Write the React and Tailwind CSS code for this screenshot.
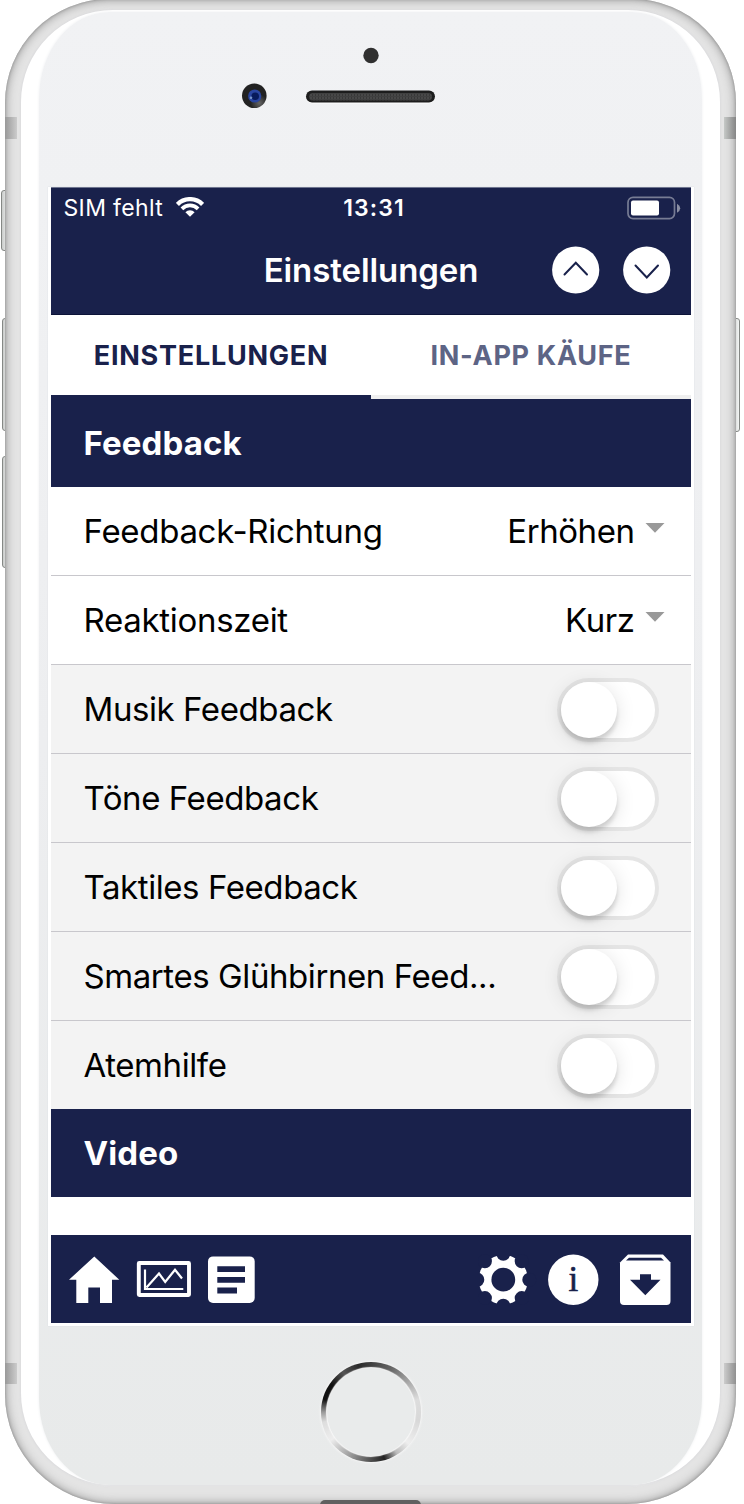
import { useState } from 'react'

const selects = [
  { label: 'Feedback-Richtung', value: 'Erhöhen' },
  { label: 'Reaktionszeit', value: 'Kurz' },
]

const toggles = [
  'Musik Feedback',
  'Töne Feedback',
  'Taktiles Feedback',
  'Smartes Glühbirnen Feed...',
  'Atemhilfe',
]

const notches = [0, 45, 90, 135, 180, 225, 270, 315]

export default function App() {
  return (
    <main className="relative w-[744px] h-[1504px] overflow-hidden bg-white font-['Inter',sans-serif] text-black">
      <SideButtons />
      <div className="relative ml-[5px] w-[731px] h-[1505px] -mt-px rounded-t-[104px] rounded-b-[110px] px-[16px] pt-[11px] pb-[19px] bg-[#e4e4e4] shadow-[inset_0_0_3px_0_#8a8a8a,inset_0_0_9px_2px_#a8a8a8] overflow-hidden">
        <div className="h-full rounded-[92px] px-[18px] pt-[2px] bg-white shadow-[0_0_2px_1px_#dcdcde]">
          <div className="h-full rounded-[70px/86px] bg-linear-to-b from-[#f1f2f4] via-[#edeef0] to-[#e8eaea] shadow-[0_0_3px_0_#eeeff1] flex flex-col items-center">
            <Sensors />
            <Screen />
            <HomeButton />
          </div>
        </div>
        <Antennas />
      </div>
      <div className="absolute left-[320px] top-[1500px] w-[101px] h-[6px] rounded-t-[5px] bg-[#606060]" />
    </main>
  )
}

function SideButtons() {
  const base = 'absolute border border-[#858885] bg-linear-to-r from-[#c9cbca] to-[#f3f5f4] rounded-[3px]'
  return (
    <>
      <div className={`${base} left-[1px] top-[190px] w-[8px] h-[61px]`} />
      <div className={`${base} left-[2px] top-[318px] w-[8px] h-[113px]`} />
      <div className={`${base} left-[2px] top-[456px] w-[8px] h-[112px]`} />
      <div className={`${base} left-[732px] top-[318px] w-[8px] h-[114px]`} />
    </>
  )
}

function Antennas() {
  return (
    <>
      <div className="absolute left-0 top-[118px] w-[12px] h-[22px] bg-linear-to-r from-[#999] to-[#ccc]" />
      <div className="absolute right-0 top-[118px] w-[12px] h-[22px] bg-linear-to-l from-[#858585] to-[#c6c9c7]" />
      <div className="absolute left-0 top-[1364px] w-[12px] h-[21px] bg-linear-to-r from-[#999] to-[#ccc]" />
      <div className="absolute right-0 top-[1364px] w-[12px] h-[21px] bg-linear-to-l from-[#909090] to-[#ccc]" />
    </>
  )
}

function Sensors() {
  return (
    <div className="h-[175px] shrink-0 w-full flex justify-center">
      <svg width="260" height="70" viewBox="241 43 260 70" className="mt-[31px] shrink-0">
        <defs>
          <radialGradient id="lens" cx="0.7" cy="0.8" r="0.7">
            <stop offset="0" stopColor="#666" />
            <stop offset="0.5" stopColor="#222" />
          </radialGradient>
          <pattern id="mesh" width="3" height="3" patternUnits="userSpaceOnUse">
            <rect width="3" height="3" fill="#484848" />
            <rect width="1" height="3" fill="#383838" />
            <rect width="3" height="1" fill="#404040" />
          </pattern>
        </defs>
        <circle cx="371" cy="55.5" r="7.7" fill="#303030" />
        <circle cx="254.3" cy="95.7" r="12.3" fill="url(#lens)" />
        <circle cx="254.7" cy="96" r="6.6" fill="#2945a0" />
        <circle cx="255.2" cy="96.2" r="3.8" fill="#071b5c" />
        <circle cx="251" cy="97.8" r="1.3" fill="#7595cc" />
        <rect x="306" y="91" width="129" height="12.4" rx="6.2" fill="#fff" />
        <rect x="306" y="90.5" width="129" height="12" rx="6" fill="#1d1d1d" />
        <rect x="309" y="93" width="123" height="7.4" rx="3.7" fill="url(#mesh)" />
      </svg>
    </div>
  )
}

function Screen() {
  return (
    <div className="w-[646px] h-[1139px] shrink-0 px-[3px] pb-[3px] bg-white shadow-[0_0_1px_0_#cfd4dc]">
      <div className="h-full flex flex-col border-t border-[#6f758f]">
        <StatusBar />
        <NavBar />
        <Tabs />
        <SectionTitle>Feedback</SectionTitle>
        {selects.map((s) => (
          <div key={s.label} className="h-[89px] shrink-0 flex items-center pt-[2px] pl-[33px] pr-[26px] border-b border-[#c8c7cc] text-[33px] tracking-[-0.3px]">
            <span className="grow">{s.label}</span>
            <span className="tracking-[-0.45px]">{s.value}</span>
            <svg width="20" height="10" className="ml-[10px] -mt-[8px]">
              <path d="M0.5 0h19L10 9.7z" fill="#999" />
            </svg>
          </div>
        ))}
        <div className="shrink-0 bg-[#f3f3f3]">
          {toggles.map((label) => <ToggleRow key={label} label={label} />)}
        </div>
        <SectionTitle>Video</SectionTitle>
        <div className="h-[38px] shrink-0" />
        <BottomBar />
      </div>
    </div>
  )
}

function StatusBar() {
  return (
    <div className="h-[39px] shrink-0 grid grid-cols-3 items-center bg-[#19214b] pl-[13px] pr-[10px] text-white">
      <div className="flex items-center pt-[2px] text-[23px] tracking-[0.35px]">
        SIM fehlt
        <svg width="28" height="20" viewBox="176 197 28 20" className="ml-[13px] -mt-[3px]">
          <path d="M177.4 204.4A17.8 17.8 0 0 1 202.6 204.4" fill="none" stroke="#fff" strokeWidth="4.4" />
          <path d="M181.9 208.8A11.5 11.5 0 0 1 198.1 208.8" fill="none" stroke="#fff" strokeWidth="3.8" />
          <path d="M190 216.8L185.4 212.3A6.4 6.4 0 0 1 194.6 212.3Z" fill="#fff" />
        </svg>
      </div>
      <div className="text-center pt-[2px] pl-[4px] text-[23px] font-semibold tracking-[1.1px]">13:31</div>
      <div className="flex justify-end">
        <svg width="54" height="24" viewBox="627 195.5 54 24">
          <rect x="628" y="196.8" width="46.5" height="21.3" rx="5" fill="none" stroke="#777c94" strokeWidth="1.7" />
          <rect x="631" y="199.9" width="28" height="15" rx="2" fill="#fff" />
          <path d="M677 203.2q3.2 1.7 3.2 4.5t-3.2 4.5z" fill="#8b8fa3" />
        </svg>
      </div>
    </div>
  )
}

function NavBar() {
  return (
    <div className="h-[88px] shrink-0 grid grid-cols-[1fr_auto_1fr] items-center bg-[#19214b] border-b border-[#0c1338] pb-px pr-[20px] pl-[21px] text-white">
      <span />
      <h1 className="pt-[2px] text-[33px] font-semibold tracking-[-0.08px]">Einstellungen</h1>
      <div className="flex justify-end gap-[23px]">
        <RoundButton d="M12.5 28.5L23.8 16.7L35 28.5" />
        <RoundButton d="M12.5 19.5L23.8 31.5L35 19.5" />
      </div>
    </div>
  )
}

function RoundButton({ d }) {
  return (
    <button className="size-[48px]">
      <svg width="48" height="48" viewBox="0 0 48 48">
        <circle cx="23.7" cy="24" r="23.6" fill="#fff" />
        <path d={d} fill="none" stroke="#19214b" strokeWidth="2" strokeLinecap="round" />
      </svg>
    </button>
  )
}

function Tabs() {
  return (
    <div className="h-[84px] shrink-0 grid grid-cols-2 text-[27px] font-bold text-center">
      <button className="border-b-4 border-[#19214b] pt-[2px] pl-px leading-[78px] text-[#19214b] tracking-[0.75px]">EINSTELLUNGEN</button>
      <button className="border-b-4 border-[#efefef] pt-[2px] pl-px leading-[78px] text-[#5d6485] tracking-[0.7px]">IN-APP KÄUFE</button>
    </div>
  )
}

function SectionTitle({ children }) {
  return (
    <h2 className="h-[88px] shrink-0 flex items-center pt-[2px] px-[33px] bg-[#19214b] text-white text-[33px] font-bold tracking-[0.1px]">
      {children}
    </h2>
  )
}

function ToggleRow({ label }) {
  const [on, setOn] = useState(false)
  return (
    <div className="h-[89px] last:h-[88px] flex items-center justify-between pt-[2px] pl-[33px] pr-[32px] border-b last:border-b-0 border-[#c8c7cc] text-[33px] tracking-[-0.42px]">
      {label}
      <button
        onClick={() => setOn(!on)}
        className={`w-[102px] h-[64px] rounded-full border-4 border-[#e5e5e5] ${on ? 'bg-[#19214b]' : 'bg-white'}`}
      >
        <span className={`block size-[56px] rounded-full bg-white shadow-[0_5px_4px_rgba(0,0,0,0.14),0_3px_20px_rgba(0,0,0,0.12)] ${on ? 'ml-[38px]' : ''}`} />
      </button>
    </div>
  )
}

function BottomBar() {
  return (
    <nav className="h-[88px] shrink-0 flex items-center justify-between pt-[2px] bg-[#19214b]">
      <svg width="190" height="54" viewBox="68 1253 190 54" className="ml-[17px]" fill="#fff">
        <path d="M94.3 1256.6L119.3 1279.7H112V1303H100V1287.4H88.3V1303H76.3V1279.7H69z" />
        <rect x="138.8" y="1263" width="50.2" height="32" rx="0.5" fill="none" stroke="#fff" strokeWidth="3.9" />
        <path d="M145 1269.5V1289H183.3M146.5 1287.5L159 1273.5L165.2 1282L175 1269.7L182 1278.5" fill="none" stroke="#fff" strokeWidth="2.2" />
        <rect x="208" y="1256.4" width="46.7" height="46.6" rx="5" />
        <path d="M217.3 1266.3H245V1272H217.3zM217.3 1277H245V1282.7H217.3zM217.3 1287.4H237V1293.4H217.3z" fill="#19214b" />
      </svg>
      <svg width="194" height="54" viewBox="478 1253 194 54" className="mr-[19px]" fill="#fff">
        <g transform="translate(503.3 1279.7)">
          <circle r="24.6" />
          {notches.map((a) => (
            <circle key={a} cy="-26" r="7" fill="#19214b" transform={`rotate(${a})`} />
          ))}
          <circle r="11.9" fill="#19214b" />
        </g>
        <circle cx="573.3" cy="1279.7" r="25.2" />
        <text x="573.3" y="1291.4" textAnchor="middle" fontSize="35" fill="#19214b" stroke="#19214b" strokeWidth="0.6" className="font-['Liberation_Serif',serif]">i</text>
        <path d="M628 1254.5H663L670.5 1262.5V1301q0 4-4 4H624q-4 0-4-4V1262.5z" />
        <path d="M629 1257.7H661L664 1260.4H626zM640 1274.2H651V1279.7H660.5L645.3 1295.2L630 1279.7H640z" fill="#19214b" />
      </svg>
    </nav>
  )
}

function HomeButton() {
  return (
    <button className="mt-[36px] size-[100px] shrink-0 rounded-full p-[6px] shadow-[0_0_2px_1px_#f6f6f6] bg-[conic-gradient(#404040_0deg,#666_25deg,#aaa_52deg,#ddd_75deg,#d8d8d8_100deg,#eee_130deg,#bbb_148deg,#222_164deg,#555_182deg,#999_205deg,#eee_235deg,#ddd_258deg,#999_270deg,#111_285deg,#111_305deg,#555_325deg,#2a2a2a_345deg,#404040_360deg)]">
      <span className="block size-full rounded-full bg-[#e9ebeb] shadow-[0_0_1px_1px_#f8f8f8]" />
    </button>
  )
}
